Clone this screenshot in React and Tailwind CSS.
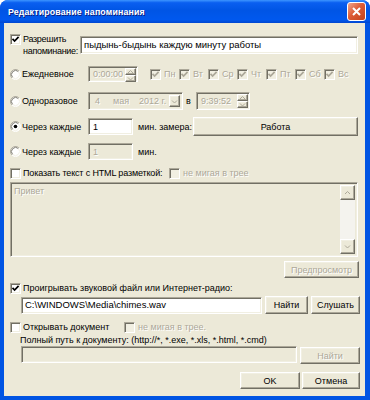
import React from "react";

const SUNKEN =
  "border border-t-[#ACA899] border-l-[#ACA899] border-b-white border-r-white shadow-[inset_1px_1px_0_#716F64,inset_-1px_-1px_0_#F1EFE2]";
const RAISED =
  "border border-t-white border-l-white border-b-[#716F64] border-r-[#716F64] shadow-[inset_-1px_-1px_0_#ACA899,inset_1px_1px_0_#F1EFE2] bg-[#ECE9D8]";
const GREY = "text-[#ACA899] [text-shadow:1px_1px_0_#fff]";

function Check({ checked, disabled }) {
  return (
    <span
      className={`inline-flex items-center justify-center w-[11px] h-[11px] shrink-0 ${SUNKEN} ${
        disabled ? "bg-[#F1EFE2]" : "bg-white"
      }`}
    >
      {checked && (
        <svg width="9" height="9" viewBox="0 0 9 9">
          <path
            d="M1.5 3.8 L3.6 6 L7.6 1.8"
            stroke={disabled ? "#ACA899" : "#000"}
            strokeWidth="1.7"
            fill="none"
          />
        </svg>
      )}
    </span>
  );
}

function Radio({ checked }) {
  return (
    <svg width="11" height="11" viewBox="0 0 12 12" className="shrink-0">
      <circle cx="6" cy="6" r="5.5" fill="#fff" />
      <path d="M2.11 9.89 A5.5 5.5 0 0 1 9.89 2.11" stroke="#ACA899" fill="none" />
      <path d="M2.82 9.18 A4.5 4.5 0 0 1 9.18 2.82" stroke="#716F64" fill="none" />
      <path d="M9.89 2.11 A5.5 5.5 0 0 1 2.11 9.89" stroke="#fff" fill="none" />
      <path d="M9.18 2.82 A4.5 4.5 0 0 1 2.82 9.18" stroke="#F1EFE2" fill="none" />
      {checked && <circle cx="6" cy="6" r="2" fill="#000" />}
    </svg>
  );
}

function Arrow({ dir, color = "#ACA899" }) {
  const d = dir === "up" ? "M1 4 L3.5 1.5 L6 4" : "M1 1.5 L3.5 4 L6 1.5";
  return (
    <svg width="7" height="5" viewBox="0 0 7 5">
      <path d={d} stroke={color} strokeWidth="1" fill="none" />
    </svg>
  );
}

function SpinBox({ value, w }) {
  return (
    <div className={`flex items-center h-full ${SUNKEN} bg-[#ECE9D8] ${w}`}>
      <span className={`flex-1 pl-[4px] ${GREY}`}>{value}</span>
      <div className="flex flex-col w-[12px] h-full py-[1px] pr-[1px]">
        <div className={`flex-1 flex items-center justify-center ${RAISED}`}>
          <Arrow dir="up" />
        </div>
        <div className={`flex-1 flex items-center justify-center ${RAISED}`}>
          <Arrow dir="down" />
        </div>
      </div>
    </div>
  );
}

function Btn({ children, className, disabled }) {
  return (
    <div
      className={`flex items-center justify-center ${RAISED} ${
        disabled ? GREY : "text-black"
      } ${className}`}
    >
      {children}
    </div>
  );
}

export default function App() {
  const days = ["Пн", "Вт", "Ср", "Чт", "Пт", "Сб", "Вс"];
  return (
    <div className="w-[370px] h-[400px] bg-[#0054E3] rounded-t-[8px] flex flex-col overflow-hidden whitespace-nowrap font-['Liberation_Sans',Arial,sans-serif] text-[9px] text-black leading-[12px]">
      {/* Title bar */}
      <div className="h-[23px] flex items-center justify-between pl-[8px] pr-[4px] bg-[linear-gradient(to_bottom,#3D95FF_0%,#0A5FF0_12%,#0055E5_45%,#0058EE_85%,#0046D0_100%)]">
        <span className="text-white font-bold text-[8.8px] tracking-[0.15px] [text-shadow:1px_1px_0_#0A1E80]">
          Редактирование напоминания
        </span>
        <div className="w-[19px] h-[19px] rounded-[3px] border border-white bg-[linear-gradient(135deg,#EFA68E_0%,#DD5C36_45%,#C2421C_100%)] flex items-center justify-center">
          <svg width="11" height="11" viewBox="0 0 11 11">
            <path d="M2 2 L9 9 M9 2 L2 9" stroke="#fff" strokeWidth="2" />
          </svg>
        </div>
      </div>

      {/* Client area */}
      <div className="ml-[4px] mr-[5px] h-[373px] bg-[#ECE9D8] flex flex-col pl-[6px]">
        {/* Row 1 */}
        <div className="mt-[10px] h-[22px] flex items-start">
          <div className="mt-[1px]">
            <Check checked />
          </div>
          <div className="ml-[2px] w-[57px] leading-[12px] tracking-[-0.3px]">
            Разрешить
            <br />
            напоминание:
          </div>
          <div className={`mt-[3px] w-[278px] h-[18px] bg-white ${SUNKEN} flex items-center pl-[3px] text-[9.5px]`}>
            пыдынь-быдынь каждую минуту работы
          </div>
        </div>

        {/* Row 2 */}
        <div className="mt-[11px] h-[16px] flex items-center">
          <Radio />
          <span className="ml-[1px] w-[66px]">Ежедневное</span>
          <SpinBox value="0:00:00" w="w-[50px]" />
          <div className="ml-[12px] flex items-center">
            {days.map((d) => (
              <div key={d} className="w-[29px] flex items-center">
                <Check checked disabled />
                <span className={`ml-[3px] ${GREY}`}>{d}</span>
              </div>
            ))}
          </div>
        </div>

        {/* Row 3 */}
        <div className="mt-[10px] h-[18px] flex items-center">
          <Radio />
          <span className="ml-[1px] w-[66px]">Одноразовое</span>
          <div className={`w-[95px] h-full flex items-center ${SUNKEN} bg-[#ECE9D8]`}>
            <span className={`pl-[6px] ${GREY}`}>4</span>
            <span className={`pl-[13px] ${GREY}`}>мая</span>
            <span className={`pl-[10px] ${GREY}`}>2012 г.</span>
            <div className="ml-auto h-full py-[2px] pr-[2px]">
              <div className={`w-[11px] h-full flex items-center justify-center ${RAISED}`}>
                <Arrow dir="down" />
              </div>
            </div>
          </div>
          <span className="ml-[3px] w-[10px]">в</span>
          <SpinBox value="9:39:52" w="w-[54px]" />
        </div>

        {/* Row 4 */}
        <div className="mt-[7px] h-[19px] flex items-center">
          <Radio checked />
          <span className="ml-[1px] w-[66px]">Через каждые</span>
          <div className={`w-[45px] h-[17px] bg-white ${SUNKEN} flex items-center pl-[4px]`}>1</div>
          <span className="ml-[5px] w-[55px]">мин. замера:</span>
          <Btn className="w-[165px] h-[19px]">Работа</Btn>
        </div>

        {/* Row 5 */}
        <div className="mt-[7px] h-[17px] flex items-center">
          <Radio />
          <span className="ml-[1px] w-[66px]">Через каждые</span>
          <div className={`w-[45px] h-[17px] bg-[#ECE9D8] ${SUNKEN} flex items-center pl-[4px] ${GREY}`}>1</div>
          <span className="ml-[5px]">мин.</span>
        </div>

        {/* Row 6 */}
        <div className="mt-[7px] h-[12px] flex items-center">
          <Check />
          <span className="ml-[2px] w-[146px] tracking-[-0.15px]">Показать текст с HTML разметкой:</span>
          <Check disabled />
          <span className={`ml-[3px] ${GREY}`}>не мигая в трее</span>
        </div>

        {/* Textarea */}
        <div className={`mt-[3px] w-[348px] h-[75px] bg-[#ECE9D8] ${SUNKEN} flex p-[2px]`}>
          <span className={`flex-1 pl-[1px] ${GREY}`}>Привет</span>
          <div className="w-[15px] h-full flex flex-col bg-[#F4F3EE]">
            <div className={`h-[15px] flex items-center justify-center ${RAISED}`}>
              <Arrow dir="up" />
            </div>
            <div className="flex-1" />
            <div className={`h-[15px] flex items-center justify-center ${RAISED}`}>
              <Arrow dir="down" />
            </div>
          </div>
        </div>

        {/* Preview */}
        <Btn disabled className="mt-[4px] ml-[274px] w-[75px] h-[17px]">
          Предпросмотр
        </Btn>

        {/* Sound */}
        <div className="mt-[4px] h-[12px] flex items-center">
          <Check checked />
          <span className="ml-[2px]">Проигрывать звуковой файл или Интернет-радио:</span>
        </div>
        <div className="mt-[2px] h-[18px] flex items-center pl-[11px]">
          <div className={`w-[241px] h-[17px] bg-white ${SUNKEN} flex items-center pl-[3px] text-[9.5px]`}>
            C:\WINDOWS\Media\chimes.wav
          </div>
          <Btn className="ml-[3px] w-[43px] h-[18px]">Найти</Btn>
          <Btn className="ml-[3px] w-[49px] h-[18px]">Слушать</Btn>
        </div>

        {/* Open doc */}
        <div className="mt-[7px] h-[12px] flex items-center">
          <Check />
          <span className="ml-[2px] w-[101px]">Открывать документ</span>
          <Check disabled />
          <span className={`ml-[3px] ${GREY}`}>не мигая в трее.</span>
        </div>
        <div className="mt-[1px] h-[12px] flex items-center pl-[10px]">
          Полный путь к документу: (http://*, *.exe, *.xls, *.html, *.cmd)
        </div>
        <div className="h-[18px] flex items-start pl-[11px]">
          <div className={`w-[276px] h-[17px] bg-[#ECE9D8] ${SUNKEN}`} />
          <Btn disabled className="ml-[3px] mt-[1px] w-[60px] h-[17px]">
            Найти
          </Btn>
        </div>

        {/* OK / Cancel */}
        <div className="mt-[8px] flex items-center pl-[230px]">
          <Btn className="w-[60px] h-[17px]">OK</Btn>
          <Btn className="ml-[2px] w-[58px] h-[17px]">Отмена</Btn>
        </div>
      </div>
    </div>
  );
}
